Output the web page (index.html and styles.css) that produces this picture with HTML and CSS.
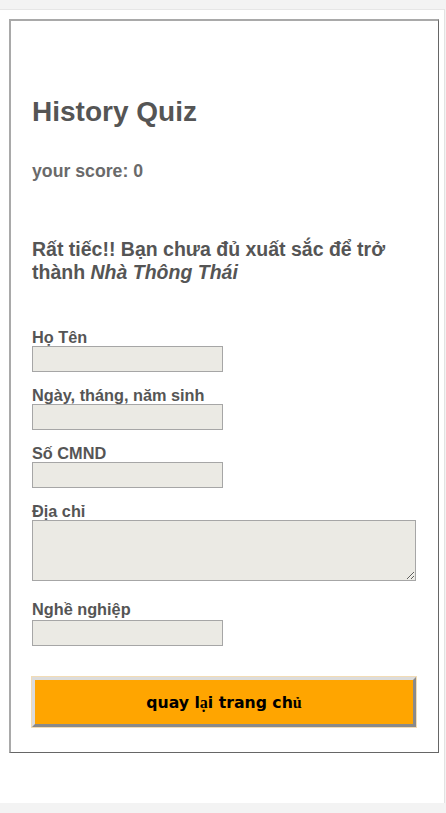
FILE: index.html
```html
<!DOCTYPE html>
<html lang="vi">
<head>
<meta charset="utf-8">
<title>History Quiz</title>
<link rel="stylesheet" href="styles.css">
</head>
<body>
<div class="page">
  <div class="quiz">
    <h1 class="title">History Quiz</h1>
    <p class="score">your score: 0</p>
    <p class="message">Rất tiếc!! Bạn chưa đủ xuất sắc để trở thành <em>Nhà Thông Thái</em></p>
    <form class="form">
      <label class="label">Họ Tên</label>
      <input class="field" type="text">
      <label class="label">Ngày, tháng, năm sinh</label>
      <input class="field" type="text">
      <label class="label">Số CMND</label>
      <input class="field" type="text">
      <label class="label">Địa chỉ</label>
      <textarea class="area"></textarea>
      <label class="label label-job">Nghề nghiệp</label>
      <input class="field" type="text">
      <button class="back" type="button">quay l<span class="fb">ạ</span>i trang ch<span class="fb">ủ</span></button>
    </form>
  </div>
</div>
</body>
</html>
```
FILE: styles.css
```css
html, body {
  margin: 0;
  padding: 0;
}
body {
  background: #f3f3f3;
  padding-top: 9px;
  height: 813px;
  box-sizing: border-box;
  overflow: hidden;
  font-family: "Liberation Sans", Arial, sans-serif;
}
.page {
  width: 445px;
  height: 794px;
  box-sizing: border-box;
  background: #ffffff;
  border-top: 1px solid #e6e6e6;
  border-right: 1px solid #e2e2e2;
  padding: 9px 0 0 9px;
}
.quiz {
  width: 430px;
  box-sizing: border-box;
  border-style: solid;
  border-width: 2px 1px 1px 2px;
  border-color: #a9a9a9 #666666 #666666 #a9a9a9;
  padding: 75px 22px 25px 21px;
}
.title {
  margin: 0;
  font-size: 28px;
  font-weight: bold;
  line-height: normal;
  color: #555555;
}
.score {
  margin: 33px 0 0;
  font-size: 17.7px;
  font-weight: bold;
  color: #6a6a6a;
}
.message {
  margin: 56px 0 0;
  font-size: 19.5px;
  font-weight: bold;
  line-height: 23px;
  color: #555555;
}
.message em {
  font-style: italic;
}
.form {
  display: flex;
  flex-direction: column;
  align-items: flex-start;
  margin-top: 44px;
}
.label {
  display: block;
  font-size: 16.3px;
  font-weight: bold;
  line-height: 18px;
  color: #555555;
}
.field, .area {
  display: block;
  box-sizing: border-box;
  background: #ebeae4;
  border: 1px solid #a6a6a6;
  margin: 0 0 14px;
  padding: 2px 4px;
  font-family: "Liberation Sans", Arial, sans-serif;
}
.field {
  width: 191px;
  height: 26px;
}
.area {
  width: 384px;
  height: 61px;
  margin-bottom: 18px;
}
.label-job {
  line-height: 21px;
}
.back {
  margin-top: 17px;
  width: 384px;
  height: 50px;
  box-sizing: border-box;
  background: #ffa500;
  border-style: solid;
  border-width: 3px;
  border-color: #dcdcdc #8a8a8a #8a8a8a #dcdcdc;
  box-shadow: 0 0 0 1px #f2dcb6;
  font-family: "DejaVu Sans", Verdana, sans-serif;
  font-weight: bold;
  font-size: 15.7px;
  color: #000000;
  padding: 0;
}
.fb {
  font-family: "Liberation Serif", "Times New Roman", serif;
  font-size: 16px;
}
```
